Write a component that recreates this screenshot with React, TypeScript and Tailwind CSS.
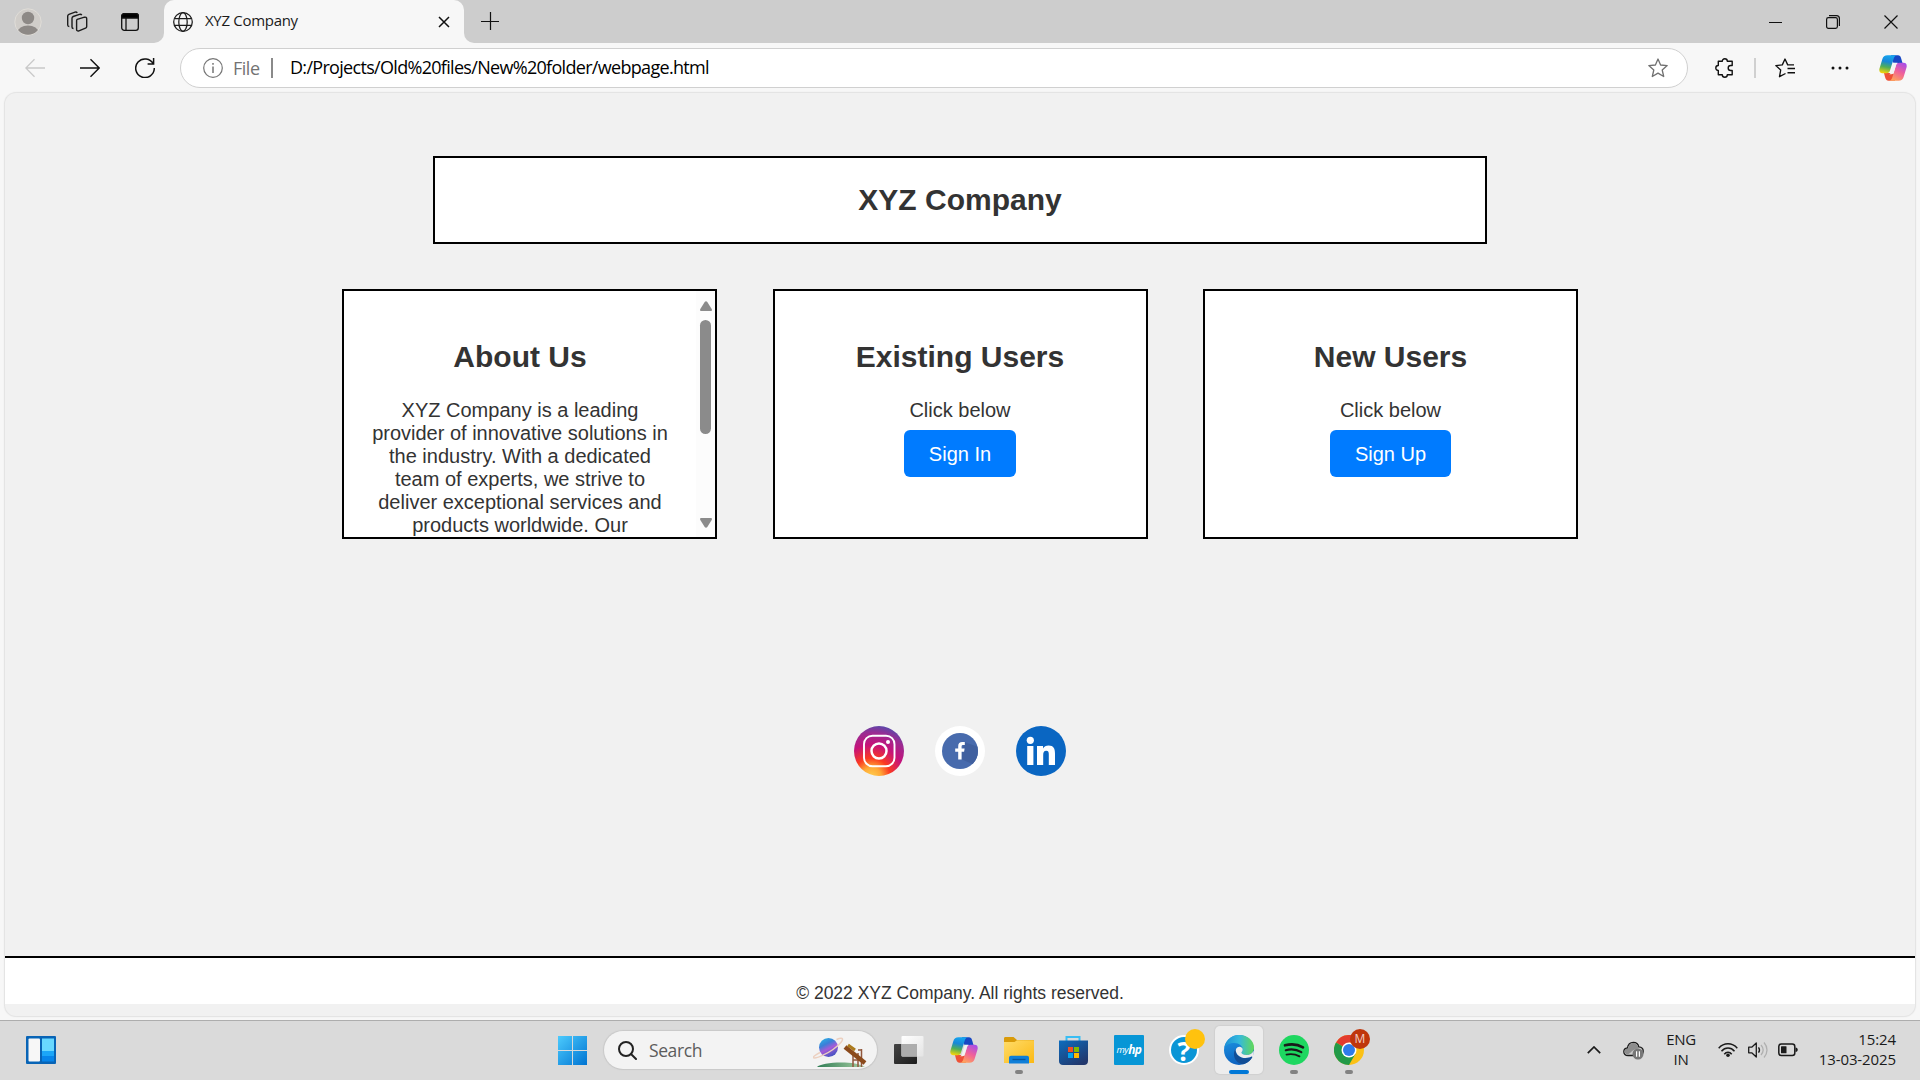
import type { ReactNode } from 'react';

const UI = "font-['Open_Sans','Noto_Sans',sans-serif]";

function CopilotLogo({ id, className }: { id: string; className: string }) {
  return (
    <svg viewBox="0 0 28 26" className={className}>
      <defs>
        <linearGradient id={id + 'a'} x1="0.5" y1="0" x2="0.3" y2="1">
          <stop offset="0" stopColor="#16a5ee" />
          <stop offset="0.35" stopColor="#1787d8" />
          <stop offset="0.65" stopColor="#4fae58" />
          <stop offset="1" stopColor="#f5d40a" />
        </linearGradient>
        <linearGradient id={id + 'b'} x1="0.8" y1="0" x2="0.3" y2="1">
          <stop offset="0" stopColor="#a74ee8" />
          <stop offset="0.5" stopColor="#f0609a" />
          <stop offset="1" stopColor="#ffa35c" />
        </linearGradient>
      </defs>
      <path d="M12 0.3h7c1.6 0 2.5 1 3 2.6l1.5 5h-7L14 7.5z" fill="#1747c4" />
      <path d="M16 25.7H9.5c-1.7 0-2.6-1-3.2-2.6L5 18h7l3 1z" fill="#ee5136" />
      <path d="M8.5 0.3h9c-1.7.6-2.4 2-3 4L11 15.500c-.6 2-1.500 2.700-3.400 2.700H3.400C.8 18.200-.2 16.200.5 13.500L3.300 4.200C4 1.600 5.700.3 8.500.3z" fill={`url(#${id}a)`} />
      <path d="M19.500 25.700h-9c1.700-.6 2.400-2 3-4L17 10.500c.6-2 1.500-2.700 3.400-2.700h4.200c2.600 0 3.600 2 2.900 4.700l-2.800 9.300c-.7 2.600-2.400 3.900-5.200 3.900z" fill={`url(#${id}b)`} />
      <path d="M16.500 7.800h2.200c-1 .5-1.500 1.400-1.900 2.700l-2 6.800c-.4 1.300-1.200 1.900-2.400 1.900h-2.200c1-.5 1.500-1.400 1.900-2.700l2-6.800c.4-1.300 1.200-1.900 2.400-1.900z" fill="#f3f3f3" />
    </svg>
  );
}

function TabBar() {
  return (
    <div className="flex h-[43px] shrink-0 bg-[#cdcdcd]">
      <div className="flex w-[164px] items-center pl-[14px]">
        <svg viewBox="0 0 28 28" className="size-7">
          <defs><clipPath id="av"><circle cx="14" cy="14" r="12.800" /></clipPath></defs>
          <circle cx="14" cy="14" r="13.200" fill="#d0cdc9" stroke="#e0ddd8" />
          <g clipPath="url(#av)" fill="#8d8986"><circle cx="14" cy="10" r="6.200" /><ellipse cx="14" cy="24.500" rx="10.500" ry="7" /></g>
        </svg>
        <svg viewBox="0 0 22 22" className="ml-6 size-[22px]" fill="none" stroke="#1c1c1c" strokeWidth="1.400">
          <path d="M11.200 8.400l7.300-2.200c1.200-.3 2.200.3 2.200 1.600v7.600c0 .8-.5 1.400-1.200 1.700l-6.600 2.700c-1.300.5-2.300-.1-2.300-1.400V9.800c0-.7.100-1.200.6-1.400z" />
          <path d="M7.500 17.500c-1 0-1.500-.6-1.500-1.500V7.200c0-.8.500-1.400 1.200-1.700l6.300-2.200c1-.3 1.800 0 2.300.8" />
          <path d="M3.300 15.500c-1-.1-1.600-.7-1.600-1.600V5.100c0-.8.500-1.400 1.200-1.700L9 1.200c1-.3 1.800 0 2.300.7" />
        </svg>
        <svg viewBox="0 0 18 18" className="ml-[33px] size-[18px]" fill="none" stroke="#111" strokeWidth="1.300">
          <rect x="0.700" y="0.700" width="16.600" height="16.600" rx="2.600" />
          <path d="M.7 5V3.200C.7 1.600 1.700.7 3.200.7h11.600c1.500 0 2.500.9 2.500 2.500V5z" fill="#000" />
          <path d="M5 5v12" />
        </svg>
      </div>
      <div className="relative flex w-[300px] items-center rounded-t-[10px] bg-[#f7f7f7] pl-[9px]">
        <div className="absolute -left-[10px] bottom-0 size-[10px] bg-[#f7f7f7]"><div className="size-full rounded-br-[10px] bg-[#cdcdcd]" /></div>
        <div className="absolute -right-[10px] bottom-0 size-[10px] bg-[#f7f7f7]"><div className="size-full rounded-bl-[10px] bg-[#cdcdcd]" /></div>
        <svg viewBox="0 0 20 20" className="size-5" fill="none" stroke="#1c1c1c" strokeWidth="1.250">
          <circle cx="10" cy="10" r="9.300" /><ellipse cx="10" cy="10" rx="4.200" ry="9.300" /><path d="M1.500 6.600h17M1.500 13.400h17" />
        </svg>
        <span className="mb-1 ml-3 w-[180px] whitespace-nowrap text-[15px] leading-5 tracking-[-0.300px] text-[#1b1b1b]">XYZ Company</span>
        <svg viewBox="0 0 12 12" className="ml-[53px] size-3" stroke="#111" strokeWidth="1.500"><path d="M1 1l10 10M11 1L1 11" /></svg>
      </div>
      <div className="flex flex-1 items-center justify-between pl-[17px] pr-[22px]">
        <svg viewBox="0 0 18 18" className="mb-[2px] size-[18px]" stroke="#111" strokeWidth="1.200"><path d="M9.500 0v18M0 9.500h18" /></svg>
        <div className="flex items-center gap-11 stroke-[#111]">
          <svg viewBox="0 0 14 14" className="size-[14px]" strokeWidth="1"><path d="M1 7.500h13" /></svg>
          <svg viewBox="0 0 14 14" className="size-[14px]" fill="none" strokeWidth="1.200"><rect x="0.600" y="2.600" width="10.800" height="10.800" rx="1.800" /><path d="M3 .6h7.500c1.700 0 2.900 1.200 2.900 2.900V11" /></svg>
          <svg viewBox="0 0 14 14" className="size-[14px]" strokeWidth="1.200"><path d="M.5.500l13 13M13.500.5l-13 13" /></svg>
        </div>
      </div>
    </div>
  );
}

function Toolbar() {
  return (
    <div className="flex h-[50px] shrink-0 items-center bg-[#f7f7f7] pl-[25px] pr-[13px]">
      <svg viewBox="0 0 20 20" className="size-5" fill="none" stroke="#c9c9c9" strokeWidth="1.300"><path d="M20 10H.8M9.500 1.200L.8 10l8.700 8.800" /></svg>
      <svg viewBox="0 0 20 20" className="ml-[35px] size-5" fill="none" stroke="#111" strokeWidth="1.400"><path d="M0 10h19.200M10.500 1.200l8.700 8.800-8.700 8.800" /></svg>
      <svg viewBox="0 0 20 20" className="ml-[35px] size-5" fill="none" stroke="#111" strokeWidth="1.500"><path d="M18.300 6A9.300 9.300 0 1 0 19.300 10M18.600 0v6h-6" /></svg>
      <div className="ml-[25px] flex h-10 w-[1508px] items-center rounded-full border border-[#d0d0d0] bg-white pl-[22px] pr-[19px]">
        <svg viewBox="0 0 20 20" className="size-5" fill="none" stroke="#767676" strokeWidth="1.200"><circle cx="10" cy="10" r="9.300" /><path d="M10 8.500V15M10 5v1.800" strokeWidth="1.500" /></svg>
        <span className="mb-px ml-[10px] w-[38px] text-[18px] leading-5 tracking-[-0.500px] text-[#737373]">File</span>
        <div className="h-5 w-[2px] bg-[#8a8a8a]" />
        <span className="mb-[2px] ml-[17px] flex-1 whitespace-nowrap text-[18px] leading-5 tracking-[-0.690px] text-black">D:/Projects/Old%20files/New%20folder/webpage.html</span>
        <svg viewBox="0 0 20 20" className="size-5" fill="none" stroke="#707070" strokeWidth="1.300" strokeLinejoin="round"><path d="M10 1l2.600 6 6.600.6-5 4.400 1.500 6.500L10 15.100l-5.700 3.400L5.800 12l-5-4.400L7.400 7z" /></svg>
      </div>
      <svg viewBox="0 0 20 20" className="ml-[27px] size-5" fill="none" stroke="#111" strokeWidth="1.400" strokeLinejoin="round"><path d="M3.300 3.300h4c0-1.500 1-2.500 2.500-2.500s2.500 1 2.500 2.500h4.900v4.200h-1.500c-1.500 0-2.500 1-2.500 2.500s1 2.500 2.500 2.500h1.500v4.200h-4.900c0 1.500-1 2.500-2.500 2.500s-2.500-1-2.500-2.500h-4v-4.200c-1.500 0-2.500-1-2.500-2.500s1-2.500 2.500-2.500z" /></svg>
      <div className="ml-[19px] h-5 w-[2px] bg-[#d0d0d0]" />
      <svg viewBox="0 0 20 20" className="ml-[19px] size-5" fill="none" stroke="#111" strokeWidth="1.350" strokeLinejoin="round"><path d="M10.500 15.500L4.500 18.700 5.700 12 .8 7.600l6.500-.7L10 1l2.700 5.900H19M12.500 10.500H20M12.500 14.700H20" /></svg>
      <svg viewBox="0 0 18 4" className="ml-[36px] h-1 w-[18px]" fill="#111"><circle cx="2" cy="2" r="1.500" /><circle cx="9" cy="2" r="1.500" /><circle cx="16" cy="2" r="1.500" /></svg>
      <CopilotLogo id="ct" className="ml-[30px] h-[26px] w-7" />
    </div>
  );
}

function Card({ title, children }: { title: string; children: ReactNode }) {
  return (
    <div className="flex h-[250px] w-[375px] overflow-hidden border-2 border-black bg-white">
      <div className="min-w-0 flex-1 px-[25px] pt-[48px] text-center">
        <h2 className="text-[30px] font-bold leading-[35px]">{title}</h2>
        {children}
      </div>
      {title === 'About Us' && (
        <div className="flex w-[19px] flex-col items-center bg-[#fcfcfc] pt-[10px] pb-[9px]">
          <svg viewBox="0 0 12 10" className="h-[10px] w-3 fill-[#8b8b8b]"><path d="M4.700 1c.7-1 1.900-1 2.600 0l4.400 7c.5 1 .2 2-1 2H1.300c-1.200 0-1.500-1-1-2z" /></svg>
          <div className="mt-[9px] h-[114px] w-[11px] rounded-full bg-[#8b8b8b]" />
          <svg viewBox="0 0 12 10" className="mt-auto h-[10px] w-3 fill-[#8b8b8b]"><path d="M4.700 9c.7 1 1.900 1 2.600 0l4.400-7c.5-1 .2-2-1-2H1.300C.1 0-.2 1 .3 2z" /></svg>
        </div>
      )}
    </div>
  );
}

function SignCard({ title, action }: { title: string; action: string }) {
  return (
    <Card title={title}>
      <p className="mt-[25px] text-[20px] leading-[23px]">Click below</p>
      <button className="mt-[8px] h-[47px] rounded-[6px] bg-[#007bff] px-[25px] pt-px text-[20px] leading-[23px] text-white">{action}</button>
    </Card>
  );
}

function SocialLinks() {
  return (
    <div className="mt-[187px] flex gap-[31px]">
      <svg viewBox="0 0 50 50" className="size-[50px]">
        <defs>
          <radialGradient id="ig" cx="0.350" cy="1.020" r="1.080">
            <stop offset="0" stopColor="#ffcf50" /><stop offset="0.180" stopColor="#ffa936" /><stop offset="0.350" stopColor="#fb3a22" /><stop offset="0.600" stopColor="#c5127a" /><stop offset="0.820" stopColor="#9b2b92" /><stop offset="1" stopColor="#4c4fb0" />
          </radialGradient>
        </defs>
        <circle cx="25" cy="25" r="25" fill="url(#ig)" />
        <g fill="none" stroke="#fff"><rect x="10" y="9.700" width="30.500" height="30.500" rx="8.500" strokeWidth="1.900" /><circle cx="25" cy="25" r="7.500" strokeWidth="2.500" /></g>
        <circle cx="34" cy="16" r="2" fill="#fff" />
      </svg>
      <svg viewBox="0 0 50 50" className="size-[50px]">
        <defs><clipPath id="fbc"><circle cx="25" cy="25" r="18" /></clipPath></defs>
        <circle cx="25" cy="25" r="25" fill="#fff" /><circle cx="25" cy="25" r="18" fill="#486bad" />
        <path d="M29 16l15 5v20L26 33z" fill="#40609f" clipPath="url(#fbc)" />
        <path d="M23.200 33.500v-7.700h-3v-3.400h3v-2.300c0-2.800 1.500-4.100 4-4.100h2.600v3.100h-1.600c-1.200 0-1.600.5-1.600 1.500v1.800h3l-.5 3.400h-2.500v7.700z" fill="#fff" />
      </svg>
      <svg viewBox="0 0 50 50" className="size-[50px]">
        <circle cx="25" cy="25" r="25" fill="#0a66c2" />
        <g fill="#fff"><circle cx="14.300" cy="14.300" r="3.600" /><path d="M11.200 20h6.200v19h-6.200zM21 20h6v2.600c1-1.800 3-3 5.600-3 5 0 6.400 3.200 6.400 8V39h-6.200V28.800c0-2.400-.3-4-2.600-4-2.400 0-3 1.800-3 4.200V39H21z" /></g>
      </svg>
    </div>
  );
}

function WebPage() {
  return (
    <div className="min-h-0 flex-1 bg-[#f7f7f7] px-[5px] pb-[4px]">
      <div className="flex h-full flex-col items-center overflow-hidden rounded-[11px] bg-[#f1f1f1] font-['Liberation_Sans',Arial,sans-serif] text-[#333] shadow-[0_0_1px_1px_#e2e2e2]">
        <h1 className="mt-[63px] flex h-[88px] w-[1054px] shrink-0 items-center justify-center border-2 border-black bg-white pb-[2px] text-[30px] font-bold leading-[35px]">XYZ Company</h1>
        <div className="mt-[45px] flex w-[1236px] shrink-0 justify-between">
          <Card title="About Us">
            <p className="mt-[25px] text-[20px] leading-[23px]">XYZ Company is a leading provider of innovative solutions in the industry. With a dedicated team of experts, we strive to deliver exceptional services and products worldwide. Our</p>
          </Card>
          <SignCard title="Existing Users" action="Sign In" />
          <SignCard title="New Users" action="Sign Up" />
        </div>
        <SocialLinks />
        <footer className="mt-[180px] h-12 w-full shrink-0 border-t-2 border-black bg-white pt-[25px] text-center text-[17.500px] leading-5">© 2022 XYZ Company. All rights reserved.</footer>
      </div>
    </div>
  );
}

function TaskItem({ children, state }: { children: ReactNode; state?: 'active' | 'open' }) {
  return (
    <div className={state === 'active' ? 'relative flex size-12 items-center justify-center rounded-[5px] bg-[#ededed] shadow-[0_0_1px_1px_#d0d0d0]' : 'relative flex size-12 items-center justify-center'}>
      {children}
      {state === 'active' && <div className="absolute bottom-0 left-[14px] h-1 w-5 rounded-full bg-[#0078d7]" />}
      {state === 'open' && <div className="absolute bottom-0 left-5 h-1 w-2 rounded-full bg-[#828282]" />}
    </div>
  );
}

function TaskIcons() {
  return (
    <div className="mb-px ml-2 flex gap-[7px]">
      <TaskItem>
        <svg viewBox="0 0 30 30" className="size-[30px]">
          <defs>
            <linearGradient id="tv" x2="1" y2="1"><stop stopColor="#444" /><stop offset="1" stopColor="#1c1c1c" /></linearGradient>
            <linearGradient id="tw" x2="1" y2="1"><stop stopColor="#fff" /><stop offset="1" stopColor="#e4e4e4" /></linearGradient>
          </defs>
          <rect x="0" y="9" width="23" height="20" rx="1" fill="url(#tv)" /><rect x="7.500" y="1" width="22" height="20.500" rx="1" fill="url(#tw)" /><path d="M7.500 9H23v12.500H8.500a1 1 0 0 1-1-1z" fill="#adadad" />
        </svg>
      </TaskItem>
      <TaskItem><CopilotLogo id="cb" className="h-[26px] w-7" /></TaskItem>
      <TaskItem state="open">
        <svg viewBox="0 0 30 30" className="size-[30px]">
          <defs><linearGradient id="fo" x2="1" y2="1"><stop stopColor="#ffdc6a" /><stop offset="1" stopColor="#fbb914" /></linearGradient></defs>
          <path d="M0 3.500c0-1 .6-1.500 1.500-1.500h8l3.500 3H29c.6 0 1 .4 1 1v2H0z" fill="#d99b0a" />
          <path d="M0 7h10.500L13 5.200h16c.6 0 1 .4 1 1V28H0z" fill="url(#fo)" />
          <path d="M5 28.500V23c0-1.400.8-2.200 2-2.200h16c1.200 0 2 .8 2 2.200v5.500z" fill="#107fd8" /><path d="M8.500 24.500h13" stroke="#0a559d" strokeWidth="1.300" />
        </svg>
      </TaskItem>
      <TaskItem>
        <svg viewBox="0 0 30 30" className="size-[30px]">
          <defs><linearGradient id="st" x2="0.700" y2="1"><stop stopColor="#0c6dbf" /><stop offset="1" stopColor="#22376c" /></linearGradient></defs>
          <path d="M7.500 7V2h13v5" fill="none" stroke="#39bdf3" strokeWidth="2" /><path d="M0 5.500h29V26c0 2.500-1.500 4-4 4H4c-2.500 0-4-1.500-4-4z" fill="url(#st)" />
          <path d="M9 12h5v5H9z" fill="#f25022" /><path d="M15 12h5v5h-5z" fill="#7fba00" /><path d="M9 18h5v5H9z" fill="#00a4ef" /><path d="M15 18h5v5h-5z" fill="#ffb900" />
        </svg>
      </TaskItem>
      <TaskItem>
        <div className="flex size-[30px] items-center justify-center rounded-[1px] bg-[#0796d6] text-[9.500px] italic leading-none tracking-[-0.500px] text-white">my<b className="text-[12px]">hp</b></div>
      </TaskItem>
      <TaskItem>
        <div className="flex size-[30px] items-center justify-center rounded-full border-2 border-white bg-[#0b96d6] text-[27px] font-bold leading-none text-white">?</div>
        <div className="absolute left-[25px] top-[3px] size-5 rounded-full bg-[#ffc20e]" />
      </TaskItem>
      <TaskItem state="active">
        <svg viewBox="0 0 30 30" className="size-[30px]">
          <defs>
            <linearGradient id="e1" x1="0" y1="0.500" x2="1" y2="0.500"><stop stopColor="#1b8fd6" /><stop offset="0.500" stopColor="#35b9dc" /><stop offset="1" stopColor="#63d957" /></linearGradient>
            <linearGradient id="e2" x2="0.300" y2="1"><stop stopColor="#1e9ae5" /><stop offset="1" stopColor="#0d62c0" /></linearGradient>
          </defs>
          <circle cx="15" cy="15" r="15" fill="url(#e2)" />
          <path d="M.3 13C1.500 5.500 7.500 0 15 0c9 0 15 6 15 12.500 0 4.500-3 7.500-7.300 7.500-3.200 0-5.200-1.200-5.200-2.400 0-.8 1.200-1.300 1.200-3.200C18.700 11 15 8 10.500 8 6 8 2 9.800.3 13z" fill="url(#e1)" />
          <path d="M11.500 14c-3 4-2 14 8 15.300 4-1.200 7.200-3.700 8.800-7 .3-.7-.3-1-.8-.7C20 25.500 11.500 22 11.500 14z" fill="#124e96" />
          <path d="M28.300 22.300c.3-.7-.3-1-.8-.7-7 3.600-15.500.2-15.800-6.600.8-2.600 3-3.600 5-3 1.300.5 2 1.500 2 2.500 0 1.800-1.200 2.300-1.200 3.100 0 1.200 2 2.400 5.200 2.400 3 0 5.500-1.500 6.700-4 .6 0 .6 3-.3 6.300z" fill="#ededed" />
        </svg>
      </TaskItem>
      <TaskItem state="open">
        <svg viewBox="0 0 30 30" className="size-[30px]" fill="none" stroke="#191919" strokeLinecap="round"><circle cx="15" cy="15" r="15" fill="#1ed760" stroke="none" /><path d="M6 10.300c6-1.600 13-.9 18 2" strokeWidth="2.600" /><path d="M6.800 15.200c5-1.300 11-.7 15.500 1.900" strokeWidth="2.200" /><path d="M7.500 19.600c4.500-.9 9-.4 13 1.800" strokeWidth="1.800" /></svg>
      </TaskItem>
      <TaskItem state="open">
        <svg viewBox="0 0 30 30" className="size-[30px]">
          <circle cx="15" cy="15" r="15" fill="#fbc116" /><path d="M15 15L2 7.500A15 15 0 0 1 28 7.500H15z" fill="#e33b2e" /><path d="M2 7.500A15 15 0 0 0 15 30l6.500-11.200L15 15z" fill="#229a48" />
          <circle cx="15" cy="15" r="7.500" fill="#fff" /><circle cx="15" cy="15" r="6" fill="#2f7bea" />
        </svg>
        <div className="absolute left-[25px] top-[3px] flex size-5 items-center justify-center rounded-full bg-[#bf360c] text-[12px] text-[#f3cfc4]">M</div>
      </TaskItem>
    </div>
  );
}

function SearchBox() {
  return (
    <div className="mb-px ml-[17px] flex h-[38px] w-[273px] items-center rounded-full bg-[#f3f3f3] pl-[14px] pr-[10px] shadow-[0_0_1px_1px_#c8c8c8]">
      <svg viewBox="0 0 19 19" className="size-[19px]" fill="none" stroke="#222" strokeWidth="2"><circle cx="8" cy="8" r="7" /><path d="M13 13l5 5" strokeLinecap="round" /></svg>
      <span className="ml-3 flex-1 text-[17.500px] leading-5 tracking-[-0.400px] text-[#5c5c5c]">Search</span>
      <svg viewBox="0 0 54 32" className="mt-1 h-8 w-[54px]">
        <defs>
          <linearGradient id="pl" x1="0" y1="0" x2="0.500" y2="1"><stop stopColor="#27bde8" /><stop offset="0.400" stopColor="#3b7fd8" /><stop offset="0.650" stopColor="#a55bd8" /><stop offset="1" stopColor="#4d55c4" /></linearGradient>
          <linearGradient id="gr" x2="1"><stop stopColor="#2f7d55" /><stop offset="1" stopColor="#a9cfa4" /></linearGradient>
        </defs>
        <path d="M4 31c4-5 38-7 48 0z" fill="url(#gr)" />
        <circle cx="15.500" cy="11.500" r="9.500" fill="url(#pl)" />
        <path d="M7 16.500c-5 2.500-8 5-6 5.400 3 .5 12-3.500 19-8.400s11-10 9-11c-.8-.4-3 0-5.500 1" fill="none" stroke="#ecd0c0" strokeWidth="1.400" />
        <path d="M40 19v12M48.500 13v18M40 24h9M45 14h3.500M45 17v14" stroke="#91573c" strokeWidth="1.500" /><path d="M32 11l20 16" stroke="#8b4a1c" strokeWidth="4.500" /><path d="M35 9l7 5" stroke="#ab7a1d" strokeWidth="3" />
      </svg>
    </div>
  );
}

function Tray() {
  return (
    <div className="mb-px ml-auto flex h-12 items-center pr-[24px] text-[15px] leading-5 text-[#1b1b1b]">
      <svg viewBox="0 0 14 8" className="h-2 w-[14px]" fill="none" stroke="#1b1b1b" strokeWidth="1.700"><path d="M.8 7.200L7 1l6.200 6.200" /></svg>
      <svg viewBox="0 0 21 19" className="ml-[22px] h-[19px] w-[21px]"><path d="M5 14.500C2.300 14.500.8 13 .8 10.800c0-2 1.500-3.600 3.600-3.800C5 3.500 7.200 1.300 10.300 1.300c3 0 5 2 5.500 4.500 2.800.2 4.400 1.900 4.400 4.200 0 2.500-1.500 4.500-4 4.500z" fill="#c9c9c9" stroke="#1b1b1b" strokeWidth="1.300" /><path d="M4.500 13.500C9 12 8 8.500 15.500 7.500 15 4 13 2 10.300 2 7.500 2 5.500 4 5 7.500c-5 .5-4.500 5-.5 6z" fill="#8d8d8d" /><circle cx="15" cy="13" r="5.500" fill="#777" /><path d="M13.600 10.300v5.400M16.400 10.300v5.400" stroke="#fff" strokeWidth="1.200" /></svg>
      <div className="mb-[2px] ml-[20px] w-[34px] text-center tracking-[-0.300px]"><p>ENG</p><p>IN</p></div>
      <svg viewBox="0 0 20 16" className="ml-5 h-4 w-5" fill="none" stroke="#1b1b1b" strokeWidth="1.500"><path d="M.7 6.200c5.200-5.800 13.400-5.800 18.600 0M3.500 9.200c3.600-4.200 9.400-4.200 13 0M6.300 12.200c2-2.600 5.400-2.600 7.400 0" /><circle cx="10" cy="13.300" r="1.800" fill="#1b1b1b" stroke="none" /></svg>
      <svg viewBox="0 0 20 18" className="ml-[10px] h-[18px] w-5" fill="none" stroke="#1b1b1b" strokeWidth="1.300" strokeLinejoin="round"><path d="M.7 6.200h3L8.300 2v14l-4.600-4.200h-3zM10.500 6.300c1.200 1.600 1.200 3.800 0 5.400" /><path d="M13 4c2.600 3 2.600 7 0 10M16 1.500c4 4.500 4 10.500 0 15" stroke="#b0b0b0" /></svg>
      <svg viewBox="0 0 20 14" className="ml-[10px] h-[14px] w-5"><rect x="0.800" y="1" width="16" height="11.500" rx="2.500" fill="none" stroke="#1b1b1b" strokeWidth="1.500" /><rect x="3" y="3.200" width="5.500" height="7" rx="0.500" fill="#1b1b1b" /><path d="M17.500 4.500c3 .5 3 4 0 4.500z" fill="#1b1b1b" /></svg>
      <div className="mb-[3px] ml-5 w-[78px] whitespace-nowrap text-right tracking-[-0.100px]"><p>15:24</p><p>13-03-2025</p></div>
    </div>
  );
}

function Taskbar() {
  return (
    <div className="flex h-[60px] shrink-0 items-center border-t border-[#adadad] bg-[#dadada] pl-[26px]">
      <svg viewBox="0 0 30 28" className="mb-px h-7 w-[30px]">
        <rect width="30" height="28" rx="1" fill="#0864b6" /><rect x="2.500" y="2.500" width="11.500" height="23" rx="1" fill="#f7f7f7" /><path d="M16 2.500h12V15H16z" fill="#68d8ff" /><path d="M16 15h12v5H16z" fill="#1ba6f8" /><path d="M16 20h12v5.500H16z" fill="#0785ea" />
      </svg>
      <svg viewBox="0 0 29 29" className="ml-[502px] size-[29px]">
        <defs><linearGradient id="win" x2="1" y2="1"><stop stopColor="#4ccbfd" /><stop offset="1" stopColor="#0074d2" /></linearGradient></defs>
        <path d="M0 0h14v14H0zM15 0h14v14H15zM0 15h14v14H0zM15 15h14v14H15z" fill="url(#win)" />
      </svg>
      <SearchBox />
      <TaskIcons />
      <Tray />
    </div>
  );
}

export default function App() {
  return (
    <div className={`flex h-screen w-full flex-col overflow-hidden bg-[#f7f7f7] ${UI}`}>
      <TabBar />
      <Toolbar />
      <WebPage />
      <Taskbar />
    </div>
  );
}
